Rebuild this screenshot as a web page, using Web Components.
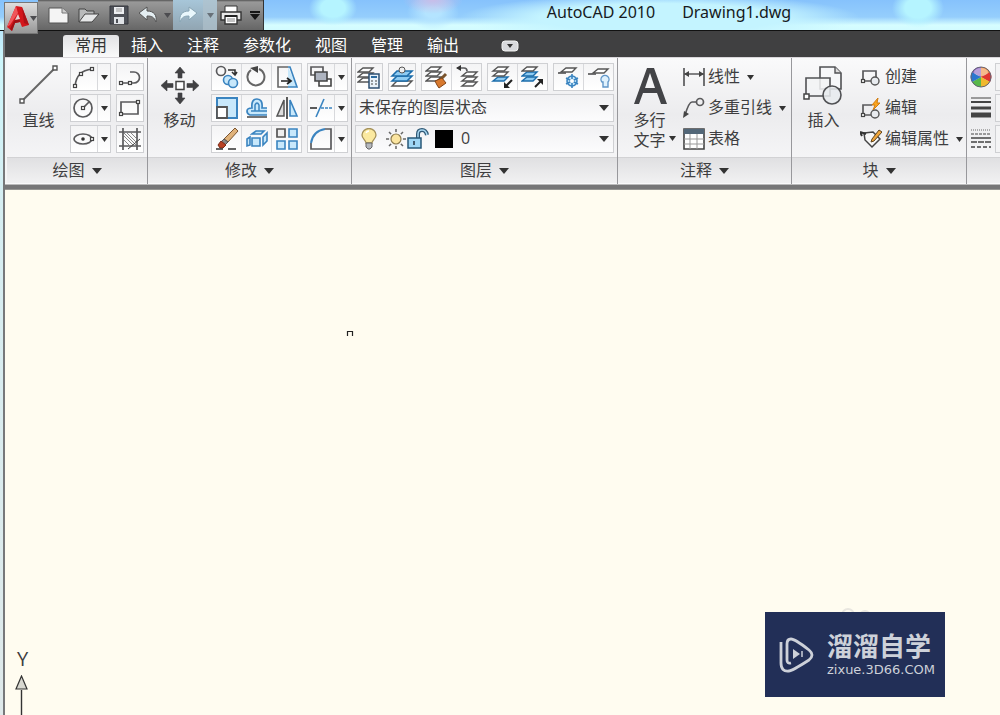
<!DOCTYPE html>
<html lang="zh-CN">
<head>
<meta charset="utf-8">
<title>AutoCAD 2010 - Drawing1.dwg</title>
<style>
  html, body { margin: 0; height: 100%; }
  body { font: 16px/20px "Liberation Sans", "Noto Sans CJK SC", sans-serif; color: #3e3e40; }
</style>
</head>
<body>
<cad-window></cad-window>
<script>
const node = (x, y) => `<rect x="${x - 1.5}" y="${y - 1.5}" width="3" height="3" fill="#fff" stroke="#444" stroke-width="1.2"/>`;
const sheet = (x, y, fill = '#fff', stroke = '#555') =>
  `<path d="M${x} ${y + 4}L${x + 5} ${y}H${x + 15}L${x + 11} ${y + 4}Z" fill="${fill}" stroke="${stroke}" stroke-width="1.4"/>`;
const stack = (x, y, c3 = '#fff', s3 = '#555', c2 = '#fff', s2 = '#555') => sheet(x, y + 10, c3, s3) + sheet(x, y + 5, c2, s2) + sheet(x, y);
const G = 'fill="none" stroke="#5a5a5c" stroke-width="1.7"';
const B = 'fill="#c8e8fb" stroke="#3a84c0" stroke-width="1.6"';

const ICONS = {
  down: [7, 5, `<path d="M0 0H7L3.5 5Z" fill="#333"/>`],
  downBig: [10, 6, `<path d="M0 0H10L5 6Z" fill="#333"/>`],
  downGrey: [7, 5, `<path d="M0 0H7L3.5 5Z" fill="#4c4c50"/>`],
  logo: [24, 28, `<path d="M10 2L16 3L23 21L16 23L14 18L9 19L6 27L1 23Z" fill="#d3161c"/><path d="M10 2L12 9L4 21L1 23Z" fill="#f0565a"/><path d="M6 27L9 19L14 18L13 13L8 17L4 25Z" fill="#a00e14"/><path d="M16 3L23 21L18 19Z" fill="#ac1218"/><path d="M12 10L14 15L9 16Z" fill="#e9d2d2"/>`],
  new: [22, 20, `<path d="M1 3H14L20 8V18H1Z" fill="#f4f4f4" stroke="#555"/><path d="M14 3V8H20" fill="#cfcfcf" stroke="#777"/>`],
  open: [22, 20, `<path d="M1 17V4H7L9 6H16V9" fill="#b9babb" stroke="#444"/><path d="M1 17L7 9H21L14 17Z" fill="#e6e7e8" stroke="#444"/>`],
  save: [20, 20, `<path d="M1 1H19V19H1Z" fill="#4e5158" stroke="#35373c"/><path d="M5 2H15V9H5Z" fill="#eceef1"/><path d="M7 4H13M7 6H13" stroke="#999"/><path d="M5 12H15V19H5Z" fill="#dfe2e6"/><path d="M7 14H9V18H7Z" fill="#4e5158"/>`],
  undo: [20, 18, `<path d="M1 7L9 1V5C16 5 19 9 18 16C16 11 14 10 9 10V14Z" fill="#e4eef2" stroke="#555"/>`],
  redo: [20, 18, `<path d="M19 7L11 1V5C4 5 1 9 2 16C4 11 6 10 11 10V14Z" fill="#e9f7fc" stroke="#88a5b4"/>`],
  print: [22, 20, `<path d="M5 1H17V8H5Z" fill="#fff" stroke="#333"/><path d="M1 7H21V15H1Z" fill="#e8e8e8" stroke="#333" stroke-width="1.4"/><path d="M5 11H17V19H5Z" fill="#fff" stroke="#333" stroke-width="1.4"/><path d="M7 14H15M7 16H15" stroke="#888"/><path d="M5 11H17" stroke="#222" stroke-width="2"/>`],
  custom: [10, 9, `<path d="M0 0H10V2H0ZM0 3H10L5 9Z" fill="#161616"/>`],
  toggle: [18, 12, `<rect x="1" y="1" width="16" height="10" rx="3" fill="#d9dadd" stroke="#f2f2f2"/><path d="M6 4H12L9 8Z" fill="#333"/>`],
  line: [44, 44, `<path d="M5 38L38 5" stroke="#666" stroke-width="2"/><path d="M3 36h4v4h-4zM36 3h4v4h-4z" fill="#fff" stroke="#555" stroke-width="1.4"/>`],
  move: [44, 44, `<path d="M18 18.500H26V26.500H18Z" fill="#fff" stroke="#444" stroke-width="1.5"/><path d="M22 4L27 10H24V15H20V10H17ZM22 41L27 35H24V30H20V35H17ZM3 22.500L9 17V20.500H15V24.500H9V28ZM41 22.500L35 17V20.500H29V24.500H35V28Z" fill="#414143" stroke="#414143" stroke-width=".6"/>`],
  arc: [24, 24, `<path d="M3 21Q4 13 8 9T20 4" ${G}/>${node(3,21)}${node(9,9)}${node(20,4)}`],
  circle: [24, 24, `<circle cx="11" cy="12" r="9" ${G}/><path d="M11 12L17 6" ${G}/>${node(11,12)}`],
  ellipse: [24, 24, `<ellipse cx="11" cy="12" rx="9" ry="5" ${G}/><circle cx="11" cy="12" r="1.800" fill="#333"/>${node(20,12)}`],
  pline: [24, 24, `<path d="M3 18H16A5.500 5.500 0 0 0 16 7H12" ${G}/>${node(3,18)}${node(12,18)}`],
  rect: [24, 24, `<path d="M3 6H20V18H3Z" ${G}/>${node(3,18)}${node(20,6)}`],
  hatch: [24, 24, `<path d="M5 1V23M19 1V23M1 5H23M1 19H23" ${G} /><path d="M6 9L15 18M6 13L11 18M9 6L18 15M13 6L18 11M6 6L18 18" stroke="#888"/><path d="M22 12L10 22" stroke="#444"/>`],
  copy: [24, 24, `<circle cx="6" cy="6" r="4.500" ${G}/><path d="M13 5H20V9M17 7L20 10L22 7" fill="none" stroke="#333" stroke-width="1.6"/><circle cx="13" cy="15" r="4.500" ${B}/><circle cx="18" cy="18" r="4.500" ${B}/>`],
  rotate: [24, 24, `<path d="M14 4A8.500 8.500 0 1 1 6 5" fill="none" stroke="#666" stroke-width="2"/><path d="M5 3L13 1V8Z" fill="#444"/>`],
  stretch: [24, 24, `<path d="M13 2L22 22H13" fill="#c8e8fb"/><path d="M13 2H3V22H13" fill="none" stroke="#666" stroke-width="1.6"/><path d="M13 2H15L22 22H13" fill="none" stroke="#3a84c0" stroke-width="1.6"/><path d="M6 16H15M12 13L16 16L12 19" fill="none" stroke="#222" stroke-width="1.7"/>`],
  order: [24, 24, `<path d="M2 2H14V10H2Z" ${G}/><path d="M10 14H22V21H10Z" fill="#fff" stroke="#444" stroke-width="1.6"/><path d="M6 7H18V16H6Z" fill="#aeb4c0" stroke="#444" stroke-width="1.6"/>`],
  scale: [24, 24, `<path d="M2 2H22V22H2Z" fill="#c8e8fb" stroke="#3a84c0" stroke-width="2"/><path d="M2 11H12V22H2Z" fill="#fff" stroke="#555" stroke-width="1.8"/>`],
  offset: [24, 24, `<path d="M22 19H5Q2 18 2 15T7 12Q6 3 12 3T17 12H22" fill="#c8e8fb" stroke="#3a84c0" stroke-width="1.7"/><path d="M22 15H6M14 15V9Q12 5 10 9V15" fill="none" stroke="#3a84c0" stroke-width="1.500"/><path d="M2 21H22" ${G}/>`],
  mirror: [24, 24, `<path d="M9 4V20H2Z" fill="#ddd" stroke="#555" stroke-width="1.5"/><path d="M15 4V20H22Z" ${B}/><path d="M12 1V23" stroke="#333" stroke-width="1.6"/>`],
  trim: [24, 24, `<path d="M1 12H8" stroke="#333" stroke-width="1.6"/><path d="M15 3L7 21" stroke="#3a84c0" stroke-width="1.6"/><path d="M12 12H23" stroke="#3a84c0" stroke-width="1.6" stroke-dasharray="3 1"/>`],
  erase: [24, 24, `<path d="M20 1L23 4L13 15L9 12Z" fill="#e0b27a" stroke="#7b5530"/><path d="M9 12L13 15L10 18L6 15Z" fill="#888" stroke="#555"/><path d="M6 14L11 18L8 21H5L3 18Z" fill="#b94225" stroke="#7a2c18"/><path d="M1 22H8M13 22H21" stroke="#333" stroke-width="1.6"/>`],
  explode: [24, 24, `<path d="M7 11H15V19H7ZM2 12L5 10V18L2 19ZM18 10L22 6V14L18 18Z" ${B}/><path d="M7 7L11 4H19L16 7Z" ${B}/>`],
  array: [24, 24, `<path d="M2 2H10V10H2Z" fill="#eee" stroke="#555" stroke-width="1.7"/><path d="M14 2H22V10H14ZM2 14H10V22H2ZM14 14H22V22H14Z" ${B}/>`],
  fillet: [24, 24, `<path d="M16 2H22V22H2V16" ${G}/><path d="M2 16Q4 4 16 2" fill="none" stroke="#3a84c0" stroke-width="2"/>`],
  layerProps: [24, 24, stack(1,3) + `<path d="M12 9H22V23H12Z" fill="#e8f2fa" stroke="#2d4f72" stroke-width="1.5"/><path d="M14 12H20" stroke="#2b6ba0" stroke-width="2"/><path d="M14 16H16M18 16H20M14 19H16M18 19H20" stroke="#444"/>`],
  layerCurrent: [24, 24, `<path d="M2 21L7 16H22L17 21Z" fill="#fff" stroke="#555" stroke-width="1.4"/><path d="M2 16L7 11H22L17 16Z" fill="#8ecbf2" stroke="#1c6dab" stroke-width="1.6"/><path d="M2 11L7 6H22L17 11Z" fill="#8ecbf2" stroke="#1c6dab" stroke-width="1.6"/><circle cx="12" cy="5" r="3" fill="#eee" stroke="#555"/>`],
  layerMatch: [24, 24, stack(1,2) + `<path d="M21 9L16 14" stroke="#79542d" stroke-width="3"/><path d="M10 16L17 13L21 18L14 23L12 20Z" fill="#d8792e" stroke="#824517"/>`],
  layerPrev: [24, 24, stack(7,7) + `<path d="M2 3H9Q12 3 12 6" ${G}/><path d="M6 0L1 3L6 6Z" fill="#333"/>`],
  layerIso: [24, 24, stack(2,2,'#8ecbf2','#1c6dab') + `<path d="M21 15L15 21" stroke="#222" stroke-width="2"/><path d="M13 17V23H19Z" fill="#222"/>`],
  layerUniso: [24, 24, stack(1,2,'#8ecbf2','#1c6dab','#8ecbf2','#1c6dab') + `<path d="M14 22L20 16" stroke="#222" stroke-width="2"/><path d="M22 20V14H16Z" fill="#222"/>`],
  layerFreeze: [24, 24, sheet(4,3) + `<path d="M9 8H1" ${G}/><circle cx="15" cy="16" r="5" ${B}/><path d="M15 9V23M9 13L21 19M9 19L21 13" stroke="#3a84c0" stroke-width="1.6"/><circle cx="15" cy="16" r="2" fill="#fff"/>`],
  layerOff: [24, 24, sheet(6,4) + `<path d="M9 9H1" ${G}/><path d="M15 17A4 4 0 1 1 21 17V22H16V17Z" fill="#dff1fd" stroke="#6197c9" stroke-width="1.4"/>`],
  bulb: [16, 22, `<path d="M5 15C5 12 1 11 1 7A7 6.500 0 0 1 15 7C15 11 11 12 11 15Z" fill="#fbe9a0" stroke="#a5925a" stroke-width="1.3"/><path d="M5 15H11V19L9 21H7L5 19Z" fill="#b5b8bd" stroke="#666"/><path d="M5 5Q6 3 8 3" stroke="#fff" stroke-width="1.500" fill="none"/>`],
  sun: [22, 22, `<path d="M11 1V21M1 11H21M4 4L18 18M18 4L4 18" stroke="#666" stroke-width="1.5"/><circle cx="11" cy="11" r="5.500" fill="#fbe5a0" stroke="#f7f7f7" stroke-width="3"/><circle cx="11" cy="11" r="5" fill="#fbe5a0" stroke="#8d7b4d" stroke-width="1.2"/>`],
  lock: [22, 22, `<path d="M11 10V6Q11 2 15 2T20 7" fill="none" stroke="#2f5875" stroke-width="4"/><path d="M11 10V6Q11 2 15 2T20 7" fill="none" stroke="#a9d8f2" stroke-width="1.500"/><path d="M1 10H14V20H1Z" fill="#9fd6f5" stroke="#285878" stroke-width="1.5"/><path d="M7 13V17" stroke="#234" stroke-width="1.500"/>`],
  swatch: [18, 18, `<path d="M0 0H18V18H0Z" fill="#000"/>`],
  bigA: [44, 44, `<path d="M6 41L19 5H26L39 41H33L29 30H15L11 41ZM17 25H27L22 10Z" fill="#434447" fill-rule="evenodd"/>`],
  linear: [22, 22, `<path d="M1 2V20M21 2V20M1 8H21" ${G}/><path d="M1 8L6 5V11ZM21 8L16 5V11Z" fill="#444"/>`],
  leader: [22, 22, `<path d="M2 18Q6 5 9 5H13" ${G}/><circle cx="17" cy="5" r="3.500" ${G}/><path d="M0 21L1 14L6 17Z" fill="#444"/>`],
  table: [22, 22, `<path d="M1 1H21V21H1Z" fill="#fff" stroke="#444" stroke-width="1.6"/><path d="M1 1H21V6H1Z" fill="#536778"/><path d="M1 11H21M1 16H21M7 6V21M14 6V21" stroke="#999"/>`],
  insert: [44, 44, `<path d="M18 17V4H33L39 10V26H18Z" fill="#f6f7f9" stroke="#505154" stroke-width="1.6"/><path d="M33 4V10H39" fill="#ddd" stroke="#505154" stroke-width="1.4"/><path d="M4 15H28V33H4Z" fill="#f2f3f5" fill-opacity=".85" stroke="#505154" stroke-width="1.6"/><circle cx="30" cy="32" r="9" fill="#e8ebef" fill-opacity=".85" stroke="#505154" stroke-width="1.6"/><path d="M2 31h5v5h-5z" fill="#fff" stroke="#444" stroke-width="1.5"/>`],
  create: [22, 22, `<path d="M3 5H16V15H3Z" ${G}/><circle cx="15" cy="15" r="4" fill="#e8ebef" stroke="#555" stroke-width="1.4"/>${node(3,15)}`],
  edit: [22, 22, `<path d="M12 8H3V18H13" ${G}/><circle cx="15" cy="17" r="4" fill="#e8ebef" stroke="#555" stroke-width="1.4"/>${node(3,18)}<path d="M18 1L12 8H15L13 13L20 6H17Z" fill="#fba51c" stroke="#d17c11"/>`],
  attrs: [22, 22, `<path d="M4 5L13 4L20 11L12 19L5 12Z" fill="#f7f7f7" stroke="#444" stroke-width="1.5"/><path d="M0 4L6 6M0 4L2 8" stroke="#333" stroke-width="2"/><path d="M19 2L22 4L14 13L11 14L12 11Z" fill="#f0a53a" stroke="#5e4420"/>`],
  weights: [22, 22, `<path d="M1 1H21" stroke="#444"/><path d="M1 5H21" stroke="#444" stroke-width="2"/><path d="M1 11H21" stroke="#444" stroke-width="3"/><path d="M1 18H21" stroke="#444" stroke-width="5"/>`],
  types: [22, 22, `<path d="M1 2H21" stroke="#666" stroke-dasharray="1 1"/><path d="M1 6H21" stroke="#444" stroke-dasharray="3 1"/><path d="M1 10H21" stroke="#444" stroke-width="1.500"/><path d="M1 14H21" stroke="#444" stroke-dasharray="6 1" stroke-width="1.5"/><path d="M1 19H21" stroke="#444" stroke-dasharray="4 2" stroke-width="1.5"/>`],
  wheel: [22, 22, `<circle cx="11" cy="11" r="10" fill="#ccc"/><path d="M11 11V1A10 10 0 0 1 20 6Z" fill="#ef8a3c"/><path d="M11 11L20 6A10 10 0 0 1 20 16Z" fill="#e0352f"/><path d="M11 11L20 16A10 10 0 0 1 11 21Z" fill="#f0b82c"/><path d="M11 11V21A10 10 0 0 1 2 16Z" fill="#58b84a"/><path d="M11 11L2 16A10 10 0 0 1 2 6Z" fill="#2c76cf"/><path d="M11 11L2 6A10 10 0 0 1 11 1Z" fill="#8a5fc0"/><ellipse cx="11" cy="6" rx="7" ry="4" fill="#fff" opacity=".4"/><circle cx="11" cy="11" r="10" fill="none" stroke="#667"/>`],
  brand: [36, 38, `<path d="M2 6V27Q2 36 10 35Q13 35 30 24Q36 19 30 14Q16 3 12 3Q8 3 8 8V24Q8 28 12 27" fill="none" stroke="#cdd1d9" stroke-width="2.8"/><path d="M14 13L21 18L14 23Z" fill="#cdd1d9"/><path d="M23 15V21" stroke="#cdd1d9" stroke-width="1.5"/>`],
  rings: [32, 14, `<circle cx="8" cy="8" r="6" fill="none" stroke="#e9e6df" stroke-width="2"/><circle cx="25" cy="9" r="5" fill="none" stroke="#e9e6df" stroke-width="2"/>`],
  cursor: [8, 7, `<path d="M1.500 6V1.500H6.500V6" fill="none" stroke="#222" stroke-width="1.2"/>`],
  axis: [14, 40, `<path d="M6.500 15V40" stroke="#333" stroke-width="1.4"/><path d="M6.500 1L12 14H1Z" fill="#d8d8d0" stroke="#333" stroke-width="1.2"/>`]
};

const define = (name, css, html) => customElements.define(name, class extends HTMLElement {
  constructor() { super(); this.attachShadow({ mode: 'open' }); }
  connectedCallback() {
    if (this.shadowRoot.childNodes.length) return;
    this.shadowRoot.innerHTML = `<style>*{box-sizing:border-box}button{font:inherit;color:inherit;background:none;border:0;padding:0;margin:0;white-space:nowrap}${css}</style>` +
      (typeof html === 'function' ? html(n => this.getAttribute(n) || '', n => this.hasAttribute(n)) : html);
  }
});

define('cad-icon', ':host{display:block;flex:none}svg{display:block}', a => {
  const [w, h, body] = ICONS[a('name')];
  return `<svg width="${w}" height="${h}" viewBox="0 0 ${w} ${h}" aria-hidden="true">${body}</svg>`;
});

define('tool-group', `
  :host{display:flex;height:28px;border:1px solid #cfd0d3;background:linear-gradient(#f4f4f5,#fff);--cell:29px}
  :host([single]){--cell:26px}
  ::slotted(*){border-left:1px solid #d8d9dc}
  ::slotted(:first-child){border-left:0}`, '<slot></slot>');

define('tool-button', `
  :host{display:block}
  button{width:var(--cell);height:26px;display:grid;place-items:center}
  :host([menu]) button{width:12px}`,
  a => `<button type="button" aria-label="${a('label')}"><cad-icon name="${a('icon')}"></cad-icon></button>`);

define('big-button', `
  :host{display:block;width:63px;flex:none}
  button{width:100%;display:flex;flex-direction:column;align-items:center;gap:4px}
  .label{display:grid;grid-template-columns:1fr auto 1fr;width:100%}
  .label span{grid-column:2}
  cad-icon[name=down]{grid-column:3;align-self:end;padding:0 0 10px 3px}`,
  (a, has) => `<button type="button"><cad-icon name="${a('icon')}"></cad-icon><div class="label"><span>${a('label').replace('|', '<br>')}</span>${has('menu') ? '<cad-icon name="down"></cad-icon>' : ''}</div></button>`);

define('row-button', `
  :host{display:block}
  button{height:28px;display:flex;align-items:center;gap:3px}
  cad-icon[name=down]{margin-left:4px}`,
  (a, has) => `<button type="button" aria-label="${a('label')}"><cad-icon name="${a('icon')}"></cad-icon>${has('bare') ? '' : `<span>${a('label')}</span>`}${has('menu') ? '<cad-icon name="down"></cad-icon>' : ''}</button>`);

define('layer-select', `
  :host{display:grid;grid-template:28px / 1fr;align-items:center}
  select{grid-area:1/1;width:100%;height:28px;appearance:none;font:16px/20px "Open Sans","Noto Sans CJK SC",sans-serif;color:inherit;border:1px solid #cfd0d3;border-radius:0;background:linear-gradient(#f1f1f3,#fcfcfd);padding:0 20px 2px 3px}
  :host([states]) select{padding-left:105px}
  .arrow{grid-area:1/1;justify-self:end;margin-right:5px;pointer-events:none}
  .icons{grid-area:1/1;justify-self:start;display:flex;align-items:center;padding-left:6px;pointer-events:none}
  cad-icon[name=sun]{margin-left:8px}
  cad-icon[name=swatch]{margin-left:6px}`,
  (a, has) => `<select aria-label="${a('label')}"><option>${a('value')}</option></select>
    ${has('states') ? '<div class="icons"><cad-icon name="bulb"></cad-icon><cad-icon name="sun"></cad-icon><cad-icon name="lock"></cad-icon><cad-icon name="swatch"></cad-icon></div>' : ''}
    <cad-icon class="arrow" name="downBig"></cad-icon>`);

define('ribbon-panel', `
  :host{display:flex;flex-direction:column;flex:none;border-right:1px solid #98989c;background:linear-gradient(#fafafb,#ececee 45%,#fafafb)}
  .body{display:flex;gap:var(--gap,0);padding:5px var(--right,3px) 4px var(--left,0)}
  footer{background:linear-gradient(#e0e0e2,#f1f1f2);border-top:1px solid #d2d2d4;height:26px;display:grid}
  footer button{display:flex;align-items:center;justify-content:center;gap:7px}
  :host([last]){flex:1 0 0;border-right:0;min-width:0;overflow:hidden}`,
  a => `<div class="body"><slot></slot></div><footer>${a('label') ? `<button type="button">${a('label')}<cad-icon name="downBig"></cad-icon></button>` : ''}</footer>`);

define('cad-title', `
  :host{display:flex;height:31px;color:#161a22;
    background:
      radial-gradient(ellipse 24px 18px at 333px 8px,#b5f4ff 50%,transparent),
      radial-gradient(ellipse 30px 14px at 433px 0,#c9bde8,transparent),
      radial-gradient(ellipse 26px 18px at 433px 12px,#b4e4ff 30%,transparent),
      radial-gradient(ellipse 26px 20px at 918px 8px,#b5f4ff 50%,transparent),
      radial-gradient(ellipse 200px 24px at 660px 18px,#c4f4ff 60%,transparent),
      linear-gradient(#86c2fc 0,#95cefc 17px,#d6fdff 25px,#d2fbff 30px);
    border-bottom:1px solid #111}
  .app{width:34px;height:32px;margin:2px 0 -3px 0;position:relative;background:linear-gradient(#dedede,#989898);border:1px solid #777;display:flex;align-items:center;justify-content:center}
  .bar{display:flex;width:226px;flex:none;height:30px;padding-left:6px;background:linear-gradient(#555 0,#999 2px,#828282 50%,#666);border-right:1px solid #333}
  .bar button{width:30px;display:grid;place-items:center;flex:none}
  .bar .mid{width:28px}.bar .thin{width:11px}
  .redo{display:flex;width:44px;background:linear-gradient(#a7c6d9,#91a5b2)}
  .redo .thin{width:14px;background:#b2c3cd;opacity:.65}
  .bar .end{width:19px}
  h1{flex:1;display:flex;justify-content:center;gap:27px;padding-left:74px;margin:0;font:16px/24px "Noto Sans",sans-serif;white-space:nowrap}`, `
  <button class="app" type="button" aria-label="菜单"><cad-icon name="logo"></cad-icon><cad-icon name="downGrey"></cad-icon></button>
  <div class="bar">
    <button type="button" aria-label="新建"><cad-icon name="new"></cad-icon></button>
    <button type="button" aria-label="打开"><cad-icon name="open"></cad-icon></button>
    <button type="button" aria-label="保存"><cad-icon name="save"></cad-icon></button>
    <button class="mid" type="button" aria-label="放弃"><cad-icon name="undo"></cad-icon></button>
    <button class="thin" type="button" aria-label="放弃列表"><cad-icon name="downGrey"></cad-icon></button>
    <div class="redo"><button type="button" aria-label="重做"><cad-icon name="redo"></cad-icon></button><button class="thin" type="button" aria-label="重做列表"><cad-icon name="downGrey"></cad-icon></button></div>
    <button class="mid" type="button" aria-label="打印"><cad-icon name="print"></cad-icon></button>
    <button class="end" type="button" aria-label="自定义"><cad-icon name="custom"></cad-icon></button>
  </div>
  <h1><span>AutoCAD 2010</span><span>Drawing1.dwg</span></h1>`);

define('cad-tabs', `
  :host{display:flex;align-items:end;height:26px;background:#404041;padding-left:58px;color:#fff}
  button{height:22px;padding:0 12px}
  .on{background:linear-gradient(#e2e2e4,#fafafa);color:#333;border-radius:3px 3px 0 0}
  .toggle{padding:0;margin-left:30px;display:grid;place-items:center}`, `
  <button class="on" type="button">常用</button><button type="button">插入</button><button type="button">注释</button><button type="button">参数化</button><button type="button">视图</button><button type="button">管理</button><button type="button">输出</button>
  <button class="toggle" type="button" aria-label="最小化功能区"><cad-icon name="toggle"></cad-icon></button>`);

const tb = (icon, label, menu) => `<tool-button icon="${icon}" label="${label}"></tool-button>${menu ? `<tool-button menu icon="down" label="${label}列表"></tool-button>` : ''}`;
const one = (icon, label, menu) => `<tool-group single>${tb(icon, label, menu)}</tool-group>`;

define('cad-ribbon', `
  :host{display:flex;height:133px;box-sizing:border-box;padding:1px 0 6px 2px;background:linear-gradient(#d9d6da 0 1px,#f5f5f6 1px 126px,#fff 127px,#777778 128px 132px,#b5b5ae 133px);overflow:hidden}
  .rows,.row{display:flex;gap:5px}
  .rows{flex-direction:column;gap:3px}
  .field{width:60px;height:28px;border:1px solid #cfd0d3;background:#f4f4f5}
  .props{--left:3px;--gap:3px}
  .layer{--left:3px}
  .note{--gap:2px;--right:5px}
  .block{--gap:5px}`, `
  <ribbon-panel label="绘图">
    <big-button icon="line" label="直线"></big-button>
    <div class="rows">
      <div class="row">${one('arc','圆弧',1)}${one('pline','多段线')}</div>
      <div class="row">${one('circle','圆',1)}${one('rect','矩形')}</div>
      <div class="row">${one('ellipse','椭圆',1)}${one('hatch','图案填充')}</div>
    </div>
  </ribbon-panel>
  <ribbon-panel label="修改">
    <big-button icon="move" label="移动"></big-button>
    <div class="rows">
      <div class="row"><tool-group>${tb('copy','复制')}${tb('rotate','旋转')}${tb('stretch','拉伸')}</tool-group>${one('order','绘图次序',1)}</div>
      <div class="row"><tool-group>${tb('scale','缩放')}${tb('offset','偏移')}${tb('mirror','镜像')}</tool-group>${one('trim','修剪',1)}</div>
      <div class="row"><tool-group>${tb('erase','删除')}${tb('explode','分解')}${tb('array','阵列')}</tool-group>${one('fillet','圆角',1)}</div>
    </div>
  </ribbon-panel>
  <ribbon-panel class="layer" label="图层">
    <div class="rows">
      <div class="row">${one('layerProps','图层特性')}${one('layerCurrent','置为当前')}
        <tool-group>${tb('layerMatch','匹配')}${tb('layerPrev','上一个')}</tool-group>
        <tool-group>${tb('layerIso','隔离')}${tb('layerUniso','取消隔离')}</tool-group>
        <tool-group>${tb('layerFreeze','冻结')}${tb('layerOff','关闭')}</tool-group></div>
      <layer-select label="图层状态" value="未保存的图层状态"></layer-select>
      <layer-select label="图层" value="0" states></layer-select>
    </div>
  </ribbon-panel>
  <ribbon-panel class="note" label="注释">
    <big-button icon="bigA" label="多行|文字" menu></big-button>
    <div class="rows">
      <row-button icon="linear" label="线性" menu></row-button>
      <row-button icon="leader" label="多重引线" menu></row-button>
      <row-button icon="table" label="表格"></row-button>
    </div>
  </ribbon-panel>
  <ribbon-panel class="block" label="块">
    <big-button icon="insert" label="插入"></big-button>
    <div class="rows">
      <row-button icon="create" label="创建"></row-button>
      <row-button icon="edit" label="编辑"></row-button>
      <row-button icon="attrs" label="编辑属性" menu></row-button>
    </div>
  </ribbon-panel>
  <ribbon-panel class="props" last>
    <div class="rows">
      <row-button bare icon="wheel" label="对象颜色"></row-button>
      <row-button bare icon="weights" label="线宽"></row-button>
      <row-button bare icon="types" label="线型"></row-button>
    </div>
    <div class="rows"><div class="field"></div><div class="field"></div><div class="field"></div></div>
  </ribbon-panel>`);

define('brand-card', `
  :host{display:flex;align-items:center;gap:12px;width:180px;height:85px;padding-left:14px;box-sizing:border-box;background:#222f57;color:#cdd1d9}
  strong,span{display:block;white-space:nowrap}
  strong{font-size:26px;line-height:30px;font-weight:700}
  span{font:13px/16px "DejaVu Sans",sans-serif}`, `
  <cad-icon name="brand"></cad-icon><div><strong>溜溜自学</strong><span>zixue.3D66.COM</span></div>`);

define('cad-canvas', `
  :host{display:block;flex:1;position:relative;background:#fffcf0;overflow:hidden}
  .cursor{position:absolute;left:341px;top:140px}
  .ucs{position:absolute;left:10px;bottom:0;display:flex;flex-direction:column}
  .ucs span{font:20px/28px "Open Sans",sans-serif;padding:0 0 2px 2px}
  brand-card{position:absolute;right:55px;bottom:18px}
  .rings{position:absolute;right:128px;bottom:94px}`, `
  <cad-icon class="cursor" name="cursor"></cad-icon>
  <div class="ucs"><span>Y</span><cad-icon name="axis"></cad-icon></div>
  <cad-icon class="rings" name="rings"></cad-icon>
  <brand-card></brand-card>`);

define('cad-window', `
  :host{display:flex;flex-direction:column;min-height:100vh;box-sizing:border-box;background:linear-gradient(#a9d8fb,#cdf6fb 60px,#d6eef2 200px,#dfe9ea)}
  cad-title{padding-left:4px}
  .frame{margin-left:3px;border-left:2px solid #77787a;flex:1;display:flex;flex-direction:column}`, `
  <cad-title></cad-title>
  <div class="frame"><cad-tabs></cad-tabs><cad-ribbon></cad-ribbon><cad-canvas></cad-canvas></div>`);
</script>
</body>
</html>
